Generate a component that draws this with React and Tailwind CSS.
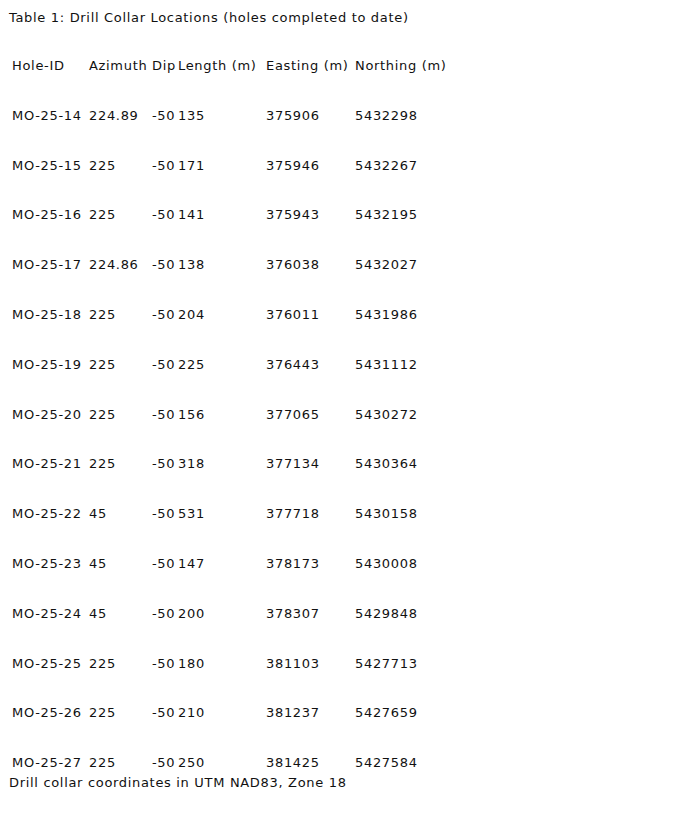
import React from 'react'

const COLS = ['w-[77px]', 'w-[63px]', 'w-[26px]', 'w-[88px]', 'w-[89px]', 'w-[100px]']

const HEAD = ['Hole-ID', 'Azimuth', 'Dip', 'Length (m)', 'Easting (m)', 'Northing (m)']

const ROWS = [
  ['MO-25-14', '224.89', '-50', '135', '375906', '5432298'],
  ['MO-25-15', '225', '-50', '171', '375946', '5432267'],
  ['MO-25-16', '225', '-50', '141', '375943', '5432195'],
  ['MO-25-17', '224.86', '-50', '138', '376038', '5432027'],
  ['MO-25-18', '225', '-50', '204', '376011', '5431986'],
  ['MO-25-19', '225', '-50', '225', '376443', '5431112'],
  ['MO-25-20', '225', '-50', '156', '377065', '5430272'],
  ['MO-25-21', '225', '-50', '318', '377134', '5430364'],
  ['MO-25-22', '45', '-50', '531', '377718', '5430158'],
  ['MO-25-23', '45', '-50', '147', '378173', '5430008'],
  ['MO-25-24', '45', '-50', '200', '378307', '5429848'],
  ['MO-25-25', '225', '-50', '180', '381103', '5427713'],
  ['MO-25-26', '225', '-50', '210', '381237', '5427659'],
  ['MO-25-27', '225', '-50', '250', '381425', '5427584'],
]

function Row({ cells, className }) {
  return (
    <div className={`flex items-end pl-[3px] ${className}`}>
      {cells.map((c, i) => (
        <div key={i} className={`${COLS[i]} shrink-0 whitespace-nowrap`}>{c}</div>
      ))}
    </div>
  )
}

export default function App() {
  return (
    <div className="min-h-[830px] bg-white pl-[9px] pt-[10px] text-[13px] leading-4 tracking-[0.68px] text-[#111]" style={{ fontFamily: '"DejaVu Sans", Verdana, sans-serif' }}>
      <p>Table 1: Drill Collar Locations (holes completed to date)</p>

      <Row cells={HEAD} className="mt-8" />
      {ROWS.map(r => (
        <Row key={r[0]} cells={r} className="h-[49.8px]" />
      ))}

      <p className="mt-1">Drill collar coordinates in UTM NAD83, Zone 18</p>
    </div>
  )
}
